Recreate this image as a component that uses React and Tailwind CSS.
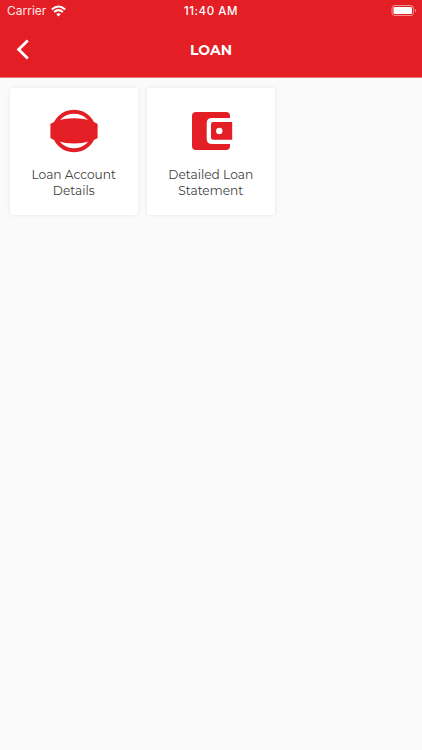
function LoanAccountIcon() {
  return (
    <svg className="h-[50px] w-[50px]" viewBox="49 106 50 50" fill="none">
      <ellipse cx="74" cy="131" rx="20" ry="19.2" stroke="#e31e25" strokeWidth="4" />
      <path
        d="M50.4 124.6Q50.4 123.9 51 123.6L55.3 121.5Q64 118.3 74 118.3T92.7 121.5L97 123.6Q97.6 123.9 97.6 124.6V137.4Q97.6 138.1 97 138.4L92.7 140.5Q84 143.4 74 143.4T55.3 140.5L51 138.4Q50.4 138.1 50.4 137.4Z"
        fill="#e31e25"
      />
    </svg>
  );
}

function WalletIcon() {
  return (
    <svg className="h-[50px] w-[50px]" viewBox="186 106 50 50" fill="#e31e25">
      <path d="M196 112H226Q230 112 230 116V118H212Q206.7 118 206.7 123.3V138.7Q206.7 144 212 144H230V146Q230 150 226 150H196Q192 150 192 146V116Q192 112 196 112Z" />
      <path
        fillRule="evenodd"
        d="M213.2 122H232.2V139.7H213.2Q211 139.7 211 137.5V124.2Q211 122 213.2 122ZM219.3 127.8a3.2 3.2 0 1 0 0 6.4a3.2 3.2 0 1 0 0-6.4Z"
      />
    </svg>
  );
}

function Tile({ icon, first, second }) {
  return (
    <button className="flex h-[127px] w-[127.5px] flex-col items-center rounded-[3px] bg-white pt-[18px] text-[12.2px] leading-[16px] text-[#404040] shadow-[0_0_4px_rgba(0,0,0,0.08)]">
      {icon}
      <span className="mt-[11.5px] flex flex-col items-center whitespace-nowrap">
        <span>{first}</span>
        <span>{second}</span>
      </span>
    </button>
  );
}

export default function App() {
  return (
    <div className="flex h-[750px] w-[422px] flex-col overflow-hidden bg-[#fafafa] font-['Montserrat','Inter',sans-serif]">
      <header className="h-[78px] border-b border-[#e7787b] bg-[#e31e25] text-white">
        <div className="grid h-[22px] grid-cols-[1fr_auto_1fr] items-center font-['Inter',sans-serif] text-[12px] leading-[22px]">
          <div className="flex items-center gap-[5px] pl-[7px] text-white/90">
            <span>Carrier</span>
            <svg className="h-[12px] w-[15px]" viewBox="0 0 15 12" fill="none" stroke="white" strokeWidth="2">
              <path d="M.8 4.5Q7.5-1.4 14.2 4.5M3.1 7.1Q7.5 3.2 11.9 7.1" />
              <path d="M5.2 9.1Q7.5 7.2 9.8 9.1L7.5 11.4Z" fill="white" stroke="none" />
            </svg>
          </div>
          <span className="text-[11.5px] font-medium tracking-[0.55px]">11:40 AM</span>
          <svg className="mr-[5px] h-[12px] w-[26px] justify-self-end" viewBox="0 0 26 12">
            <rect x="1" y="0.5" width="21.5" height="10" rx="2.7" fill="none" stroke="white" strokeOpacity=".5" />
            <rect x="2.5" y="2" width="18.5" height="7" rx="1.2" fill="white" />
            <path d="M24 3.7Q25.2 4.3 25.2 5.5T24 7.3Z" fill="white" fillOpacity=".55" />
          </svg>
        </div>
        <div className="grid h-[55px] grid-cols-[1fr_auto_1fr] items-center">
          <button className="pl-[16px]" aria-label="Back">
            <svg className="h-[22px] w-[14px]" viewBox="0 0 14 22" fill="none" stroke="white" strokeWidth="2.8">
              <path d="M11.8 1.6L2.6 10.5L11.8 19.4" />
            </svg>
          </button>
          <h1 className="text-[14px] leading-[20px] font-bold">LOAN</h1>
        </div>
      </header>
      <main className="flex gap-[9.5px] px-[10px] pt-[9.8px]">
        <Tile icon={<LoanAccountIcon />} first="Loan Account" second="Details" />
        <Tile icon={<WalletIcon />} first="Detailed Loan" second="Statement" />
      </main>
    </div>
  );
}
